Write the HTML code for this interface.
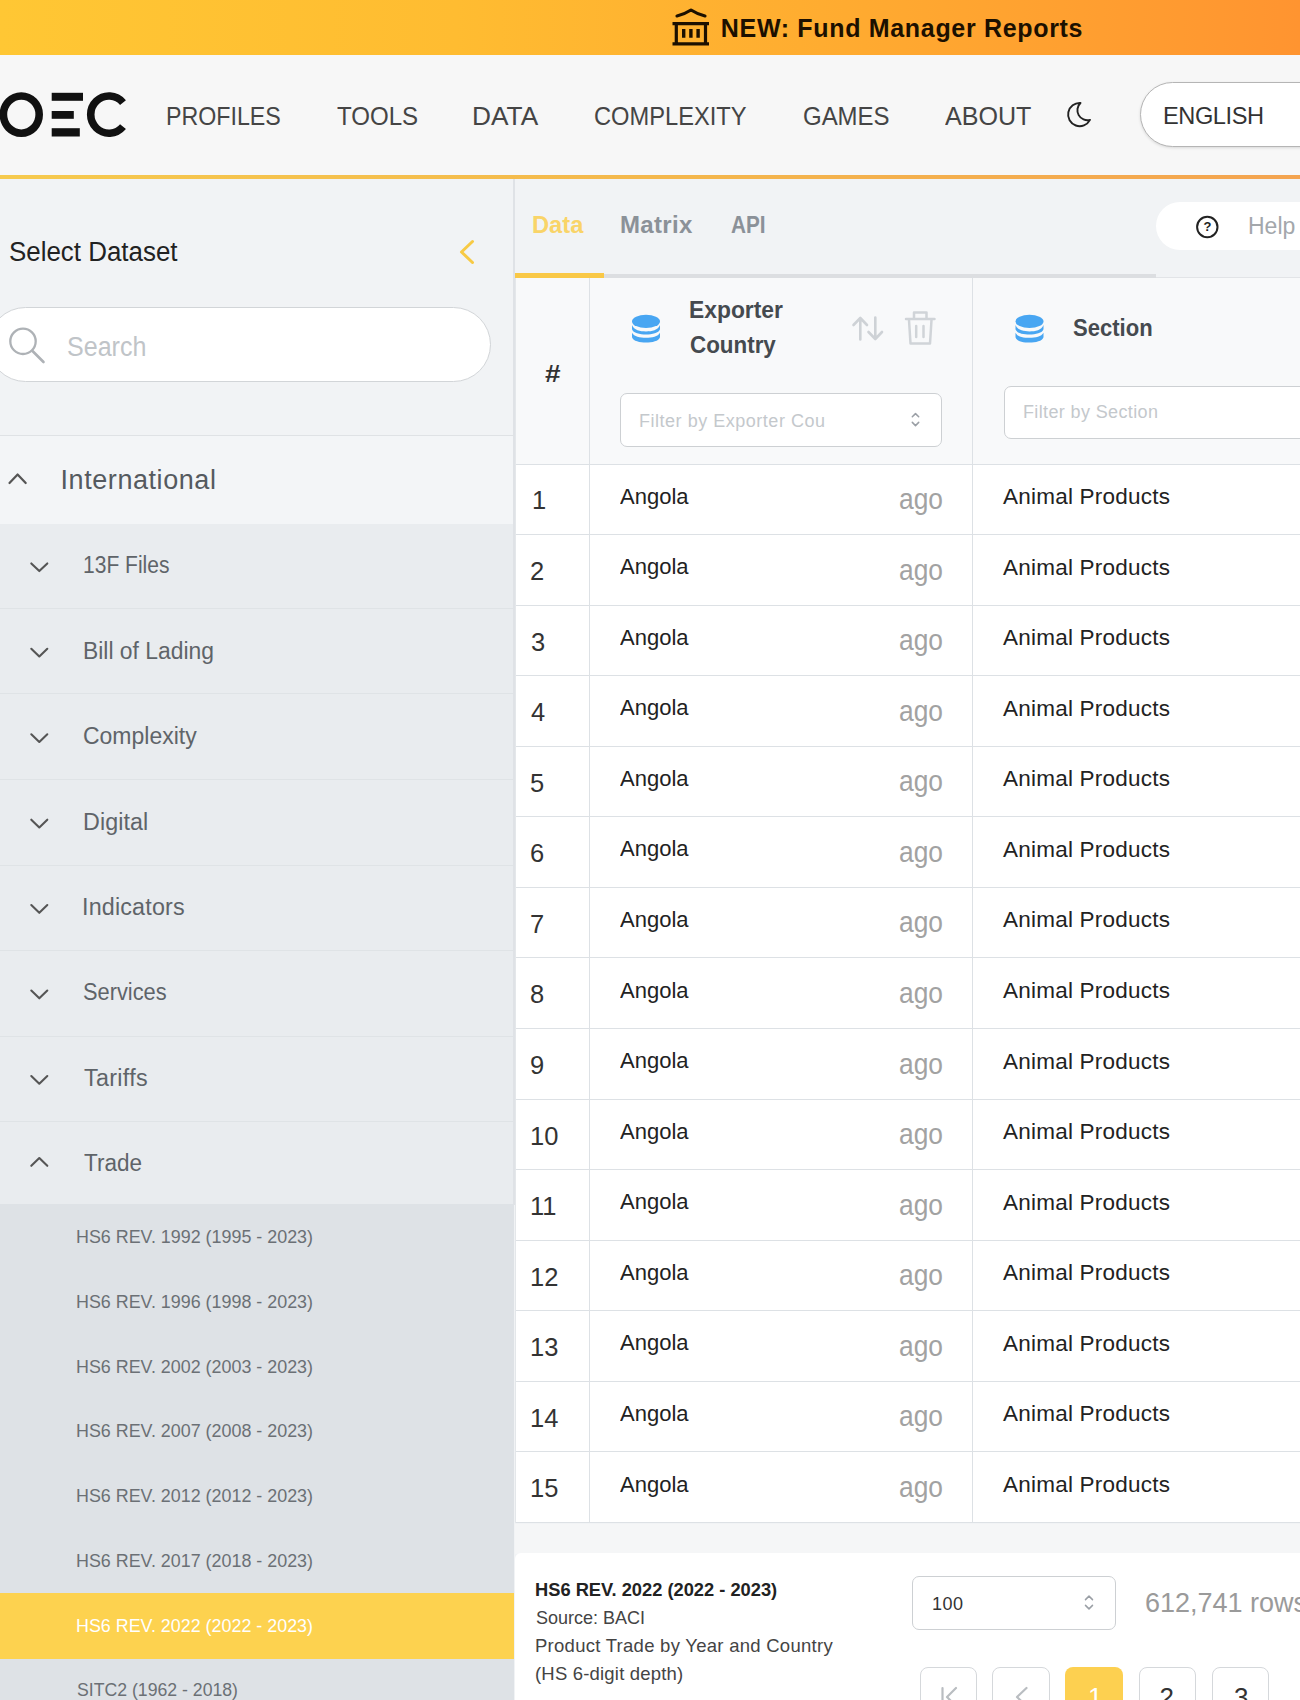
<!DOCTYPE html>
<html lang="en"><head><meta charset="utf-8"><title>OEC Data Explorer</title>
<style>
html,body{margin:0;padding:0}
body{width:1300px;height:1700px;position:relative;overflow:hidden;background:#f1f3f5;font-family:"Liberation Sans",sans-serif}
.b{position:absolute;display:block}
.t{position:absolute;white-space:nowrap;line-height:1;transform-origin:0 50%}
</style></head>
<body>
<div class="b" style="left:0px;top:0px;width:1300px;height:54.5px;background:linear-gradient(90deg,#ffc734 0%,#ffbc31 35%,#ffab30 65%,#ff9430 100%);"></div>
<div class="b" style="left:0px;top:54.5px;width:1300px;height:121px;background:#f7f7f7;"></div>
<div class="b" style="left:0px;top:174.5px;width:1300px;height:4px;background:linear-gradient(90deg,#f6ca4e 0%,#f4b84c 50%,#f4a450 100%);"></div>
<div class="b" style="left:0px;top:178.5px;width:1300px;height:1522px;background:#f1f3f5;"></div>
<div class="b" style="left:1140px;top:82px;width:220px;height:65px;background:#fff;border:1.5px solid #b5b5b5;border-radius:34px;box-sizing:border-box;box-shadow:0 1px 3px rgba(0,0,0,.12);"></div>
<div class="b" style="left:0px;top:178.5px;width:514px;height:1522px;background:#f1f3f5;"></div>
<div class="b" style="left:513px;top:178.5px;width:1.5px;height:1026px;background:#dfe2e6;"></div>
<div class="b" style="left:-12px;top:307px;width:503px;height:75px;background:#fff;border:1.5px solid #d2d5d8;border-radius:38px;box-sizing:border-box;"></div>
<div class="b" style="left:0px;top:434.5px;width:514px;height:1.5px;background:#dfe2e5;"></div>
<div class="b" style="left:0px;top:436px;width:513px;height:88px;background:#f3f5f7;"></div>
<div class="b" style="left:0px;top:524px;width:513px;height:680px;background:#e9ecef;"></div>
<div class="b" style="left:0px;top:608px;width:513px;height:1px;background:#dfe3e6;"></div>
<div class="b" style="left:0px;top:693px;width:513px;height:1px;background:#dfe3e6;"></div>
<div class="b" style="left:0px;top:779px;width:513px;height:1px;background:#dfe3e6;"></div>
<div class="b" style="left:0px;top:865px;width:513px;height:1px;background:#dfe3e6;"></div>
<div class="b" style="left:0px;top:950px;width:513px;height:1px;background:#dfe3e6;"></div>
<div class="b" style="left:0px;top:1036px;width:513px;height:1px;background:#dfe3e6;"></div>
<div class="b" style="left:0px;top:1121px;width:513px;height:1px;background:#dfe3e6;"></div>
<div class="b" style="left:0px;top:1204px;width:514px;height:496px;background:#dee2e6;"></div>
<div class="b" style="left:0px;top:1593px;width:514px;height:66px;background:#fdd24f;"></div>
<div class="b" style="left:514.5px;top:273.5px;width:641.5px;height:4.5px;background:#dcdee1;"></div>
<div class="b" style="left:514.5px;top:273px;width:89px;height:4.5px;background:#f9c846;"></div>
<div class="b" style="left:1156px;top:277px;width:144px;height:1.2px;background:#e2e4e7;"></div>
<div class="b" style="left:1156px;top:202px;width:200px;height:47.5px;background:#fff;border-radius:24px;"></div>
<div class="b" style="left:515.5px;top:278px;width:785px;height:186px;background:#f8f9fa;"></div>
<div class="b" style="left:515.5px;top:464px;width:785px;height:1059px;background:#fff;"></div>
<div class="b" style="left:515.5px;top:464px;width:785px;height:1px;background:#dde1e5;"></div>
<div class="b" style="left:515.5px;top:534px;width:785px;height:1px;background:#dde1e5;"></div>
<div class="b" style="left:515.5px;top:605px;width:785px;height:1px;background:#dde1e5;"></div>
<div class="b" style="left:515.5px;top:675px;width:785px;height:1px;background:#dde1e5;"></div>
<div class="b" style="left:515.5px;top:746px;width:785px;height:1px;background:#dde1e5;"></div>
<div class="b" style="left:515.5px;top:816px;width:785px;height:1px;background:#dde1e5;"></div>
<div class="b" style="left:515.5px;top:887px;width:785px;height:1px;background:#dde1e5;"></div>
<div class="b" style="left:515.5px;top:957px;width:785px;height:1px;background:#dde1e5;"></div>
<div class="b" style="left:515.5px;top:1028px;width:785px;height:1px;background:#dde1e5;"></div>
<div class="b" style="left:515.5px;top:1099px;width:785px;height:1px;background:#dde1e5;"></div>
<div class="b" style="left:515.5px;top:1169px;width:785px;height:1px;background:#dde1e5;"></div>
<div class="b" style="left:515.5px;top:1240px;width:785px;height:1px;background:#dde1e5;"></div>
<div class="b" style="left:515.5px;top:1310px;width:785px;height:1px;background:#dde1e5;"></div>
<div class="b" style="left:515.5px;top:1381px;width:785px;height:1px;background:#dde1e5;"></div>
<div class="b" style="left:515.5px;top:1451px;width:785px;height:1px;background:#dde1e5;"></div>
<div class="b" style="left:515.5px;top:1522px;width:785px;height:1px;background:#dde1e5;"></div>
<div class="b" style="left:589px;top:278px;width:1px;height:1245px;background:#dde1e5;"></div>
<div class="b" style="left:972px;top:278px;width:1px;height:1245px;background:#dde1e5;"></div>
<div class="b" style="left:515px;top:278px;width:1.2px;height:1245px;background:#e4e7ea;"></div>
<div class="b" style="left:620px;top:392.5px;width:322px;height:54px;background:#fff;border:1.2px solid #cdd0d3;border-radius:7px;box-sizing:border-box;"></div>
<div class="b" style="left:1003.5px;top:385.5px;width:340px;height:53.5px;background:#fff;border:1.2px solid #cdd0d3;border-radius:7px;box-sizing:border-box;"></div>
<div class="b" style="left:514.5px;top:1523.5px;width:786px;height:30px;background:#f5f6f7;"></div>
<div class="b" style="left:514.5px;top:1553px;width:786px;height:150px;background:#fff;border-top-left-radius:6px;"></div>
<div class="b" style="left:912px;top:1575.5px;width:204px;height:54px;background:#fff;border:1.2px solid #cdd0d3;border-radius:7px;box-sizing:border-box;"></div>
<div class="b" style="left:919.5px;top:1666.5px;width:57.5px;height:60px;background:#fff;border:1.2px solid #d5d8db;border-radius:8px;box-sizing:border-box;"></div>
<div class="b" style="left:992px;top:1666.5px;width:57.5px;height:60px;background:#fff;border:1.2px solid #d5d8db;border-radius:8px;box-sizing:border-box;"></div>
<div class="b" style="left:1065px;top:1666.5px;width:57.5px;height:60px;background:#fdd050;border-radius:8px;"></div>
<div class="b" style="left:1138.5px;top:1666.5px;width:57.5px;height:60px;background:#fff;border:1.2px solid #d5d8db;border-radius:8px;box-sizing:border-box;"></div>
<div class="b" style="left:1211.5px;top:1666.5px;width:57.5px;height:60px;background:#fff;border:1.2px solid #d5d8db;border-radius:8px;box-sizing:border-box;"></div>
<svg class="b" style="left:0;top:0" width="1300" height="1700" viewBox="0 0 1300 1700" fill="none" stroke-linecap="round" stroke-linejoin="round">
<!-- logo -->
<g stroke="#111" stroke-width="7.6" stroke-linecap="butt" fill="none">
<ellipse cx="21.3" cy="114.6" rx="17.9" ry="18.6"/>
<path d="M123 102.6 A18.3 18.6 0 1 0 123 126.6"/>
</g>
<g fill="#111" stroke="none"><rect x="51.7" y="92.8" width="31.3" height="8"/><rect x="51.7" y="111" width="22.1" height="7.8"/><rect x="51.7" y="128.2" width="28.1" height="8.3"/></g>
<!-- bank icon -->
<g stroke="#1c1000" stroke-width="3.2" stroke-linecap="butt" stroke-linejoin="miter">
<path d="M677 16 Q684 14.5 691 10 Q698 14.5 705 16" stroke-linecap="round" stroke-linejoin="round"/>
<path d="M672.5 23.7H709M672.5 43.8H709M676.3 24V43M705.5 24V43"/>
<path d="M683.7 29V37.8M690.9 29V37.8M698.1 29V37.8" stroke-width="3.4"/>
</g>
<!-- moon -->
<path d="M1080.5 103 A11.6 11.6 0 1 0 1090 119.9 A10 10 0 0 1 1080.5 103Z" stroke="#222" stroke-width="1.9"/>
<!-- sidebar collapse chevron -->
<path d="M472.5 241.5 L461.5 252 L472.5 262.5" stroke="#f7ca45" stroke-width="3"/>
<!-- search icon -->
<circle cx="23" cy="341.3" r="12.7" stroke="#aeb2b6" stroke-width="2.3"/>
<path d="M32.5 351 L43.5 362" stroke="#aeb2b6" stroke-width="2.6"/>
<!-- chevrons -->
<path d="M9.5 483 L17.6 474.5 L25.7 483" stroke="#555" stroke-width="2.2"/>
<path d="M31.3 563.4 L39.3 571.1 L47.3 563.4" stroke="#555" stroke-width="2.1"/>
<path d="M31.3 648.8 L39.3 656.5 L47.3 648.8" stroke="#555" stroke-width="2.1"/>
<path d="M31.3 734.3 L39.3 742.0 L47.3 734.3" stroke="#555" stroke-width="2.1"/>
<path d="M31.3 819.7 L39.3 827.4 L47.3 819.7" stroke="#555" stroke-width="2.1"/>
<path d="M31.3 905.1 L39.3 912.8 L47.3 905.1" stroke="#555" stroke-width="2.1"/>
<path d="M31.3 990.6 L39.3 998.3 L47.3 990.6" stroke="#555" stroke-width="2.1"/>
<path d="M31.3 1076.0 L39.3 1083.7 L47.3 1076.0" stroke="#555" stroke-width="2.1"/>
<path d="M31.3 1165.8 L39.3 1158.0 L47.3 1165.8" stroke="#555" stroke-width="2.1"/>

<!-- help -->
<circle cx="1207.3" cy="227" r="10.2" stroke="#222" stroke-width="2"/>
<!-- db icons -->
<g fill="#48a6f2" stroke="none" transform="translate(632,314.8)"><ellipse cx="14" cy="6.6" rx="14" ry="6.6"/><path d="M0 10.2 C2 15.5 8 16.6 14 16.6 C20 16.6 26 15.5 28 10.2 V14.5 C27 18.3 20 19.7 14 19.7 C8 19.7 1 18.3 0 14.500Z"/><path d="M0 18 C2 22 8 23 14 23 C20 23 26 22 28 18 V22.500 C27 26.400 20 27.800 14 27.800 C8 27.800 1 26.400 0 22.500Z"/></g><g fill="#48a6f2" stroke="none" transform="translate(1015.5,314.8)"><ellipse cx="14" cy="6.6" rx="14" ry="6.6"/><path d="M0 10.2 C2 15.5 8 16.6 14 16.6 C20 16.6 26 15.5 28 10.2 V14.5 C27 18.3 20 19.7 14 19.7 C8 19.7 1 18.3 0 14.500Z"/><path d="M0 18 C2 22 8 23 14 23 C20 23 26 22 28 18 V22.500 C27 26.400 20 27.800 14 27.800 C8 27.800 1 26.400 0 22.500Z"/></g>
<!-- sort -->
<g stroke="#ced2d6" stroke-width="2.6">
<path d="M860.3 339.5V318.5M853.5 325L860.3 318L867 325"/>
<path d="M875.3 317.5V338.5M868.5 332L875.3 339L882 332"/>
</g>
<!-- trash -->
<g stroke="#d0d4d8" stroke-width="2.5">
<path d="M906 319H934.5M914 318.5V312.5H926.5V318.5M909 320L910.5 343.5H930L931.5 320M916.2 326V337M923.5 326V337"/>
</g>
<!-- select chevrons -->
<g stroke="#9a9fa5" stroke-width="1.5">
<path d="M912.3 416.800L915.500 413.600L918.700 416.800M912.300 422.400L915.500 425.600L918.700 422.400"/>
<path d="M1085.500 1599.600L1089 1596.100L1092.500 1599.600M1085.500 1605.400L1089 1608.900L1092.500 1605.400"/>
</g>
<!-- pagination icons -->
<g stroke="#b9bdc1" stroke-width="2.2">
<path d="M942.5 1688V1706M956 1688L947 1697L956 1706"/>
<path d="M1026.5 1688L1017 1697L1026.5 1706"/>
</g>
</svg>
<span class="t" style="left:720.8px;top:15.6px;font-size:25px;color:#1c1000;font-weight:700;letter-spacing:0.68px;">NEW: Fund Manager Reports</span>
<span class="t" style="left:166.2px;top:102.8px;font-size:26.5px;color:#454545;transform:scaleX(0.8762);">PROFILES</span>
<span class="t" style="left:337.0px;top:102.8px;font-size:26.5px;color:#454545;transform:scaleX(0.9078);">TOOLS</span>
<span class="t" style="left:472.0px;top:102.8px;font-size:26.5px;color:#454545;transform:scaleX(0.9913);">DATA</span>
<span class="t" style="left:594.0px;top:102.8px;font-size:26.5px;color:#454545;transform:scaleX(0.8934);">COMPLEXITY</span>
<span class="t" style="left:802.7px;top:102.8px;font-size:26.5px;color:#454545;transform:scaleX(0.9039);">GAMES</span>
<span class="t" style="left:944.6px;top:102.8px;font-size:26.5px;color:#454545;transform:scaleX(0.9462);">ABOUT</span>
<span class="t" style="left:1163.0px;top:105.2px;font-size:23.6px;color:#333;letter-spacing:-0.42px;">ENGLISH</span>
<span class="t" style="left:9.0px;top:239.1px;font-size:27px;color:#222;transform:scaleX(0.9595);">Select Dataset</span>
<span class="t" style="left:67.4px;top:333.5px;font-size:27px;color:#c0c4c8;transform:scaleX(0.9278);">Search</span>
<span class="t" style="left:60.5px;top:467.1px;font-size:27px;color:#555a5f;letter-spacing:0.57px;">International</span>
<span class="t" style="left:83.1px;top:554.3px;font-size:23.3px;color:#5f6469;transform:scaleX(0.9028);">13F Files</span>
<span class="t" style="left:83.0px;top:639.7px;font-size:23.3px;color:#5f6469;transform:scaleX(0.9814);">Bill of Lading</span>
<span class="t" style="left:83.0px;top:725.1px;font-size:23.3px;color:#5f6469;transform:scaleX(0.9863);">Complexity</span>
<span class="t" style="left:83.0px;top:810.6px;font-size:23.3px;color:#5f6469;letter-spacing:0.07px;">Digital</span>
<span class="t" style="left:82.0px;top:896.0px;font-size:23.3px;color:#5f6469;letter-spacing:0.18px;">Indicators</span>
<span class="t" style="left:83.1px;top:981.4px;font-size:23.3px;color:#5f6469;transform:scaleX(0.9352);">Services</span>
<span class="t" style="left:84.0px;top:1066.9px;font-size:23.3px;color:#5f6469;letter-spacing:0.32px;">Tariffs</span>
<span class="t" style="left:84.0px;top:1152.3px;font-size:23.3px;color:#5f6469;transform:scaleX(0.9655);">Trade</span>
<span class="t" style="left:76.0px;top:1228.3px;font-size:18px;color:#6b7075;transform:scaleX(0.9937);">HS6 REV. 1992 (1995 - 2023)</span>
<span class="t" style="left:76.0px;top:1293.0px;font-size:18px;color:#6b7075;transform:scaleX(0.9937);">HS6 REV. 1996 (1998 - 2023)</span>
<span class="t" style="left:76.0px;top:1357.7px;font-size:18px;color:#6b7075;transform:scaleX(0.9937);">HS6 REV. 2002 (2003 - 2023)</span>
<span class="t" style="left:76.0px;top:1422.4px;font-size:18px;color:#6b7075;transform:scaleX(0.9937);">HS6 REV. 2007 (2008 - 2023)</span>
<span class="t" style="left:76.0px;top:1487.1px;font-size:18px;color:#6b7075;transform:scaleX(0.9937);">HS6 REV. 2012 (2012 - 2023)</span>
<span class="t" style="left:76.0px;top:1551.8px;font-size:18px;color:#6b7075;transform:scaleX(0.9937);">HS6 REV. 2017 (2018 - 2023)</span>
<span class="t" style="left:76.0px;top:1616.5px;font-size:18px;color:#fff;transform:scaleX(0.9937);">HS6 REV. 2022 (2022 - 2023)</span>
<span class="t" style="left:77.0px;top:1681.2px;font-size:18px;color:#6b7075;transform:scaleX(0.9811);">SITC2 (1962 - 2018)</span>
<span class="t" style="left:532.0px;top:212.7px;font-size:24px;color:#f9d468;font-weight:700;transform:scaleX(0.9870);">Data</span>
<span class="t" style="left:620.0px;top:212.7px;font-size:24px;color:#8b9198;font-weight:700;letter-spacing:0.33px;">Matrix</span>
<span class="t" style="left:731.0px;top:212.7px;font-size:24px;color:#8b9198;font-weight:700;transform:scaleX(0.8643);">API</span>
<span class="t" style="left:1248.0px;top:214.5px;font-size:23px;color:#a3a7ab;transform:scaleX(0.9998);">Help</span>
<span class="t" style="left:545.0px;top:361.8px;font-size:24.5px;color:#333;font-weight:700;transform:scaleX(1.1429);">#</span>
<span class="t" style="left:689.0px;top:299.0px;font-size:23px;color:#454a4f;font-weight:700;transform:scaleX(0.9932);">Exporter</span>
<span class="t" style="left:690.0px;top:333.5px;font-size:23px;color:#454a4f;font-weight:700;transform:scaleX(0.9732);">Country</span>
<span class="t" style="left:1073.0px;top:317.3px;font-size:23px;color:#454a4f;font-weight:700;transform:scaleX(0.9583);">Section</span>
<span class="t" style="left:639.0px;top:411.8px;font-size:18px;color:#c4c8cc;letter-spacing:0.52px;">Filter by Exporter Cou</span>
<span class="t" style="left:1023.0px;top:403.3px;font-size:18px;color:#c4c8cc;letter-spacing:0.37px;">Filter by Section</span>
<span class="t" style="left:532.0px;top:488.4px;font-size:25.5px;color:#333;">1</span>
<span class="t" style="left:620.0px;top:485.5px;font-size:22.5px;color:#222;transform:scaleX(0.9781);">Angola</span>
<span class="t" style="left:899.1px;top:484.9px;font-size:29px;color:#a2a2a2;transform:scaleX(0.9080);">ago</span>
<span class="t" style="left:1003.0px;top:485.9px;font-size:22.5px;color:#222;letter-spacing:0.22px;">Animal Products</span>
<span class="t" style="left:530.0px;top:559.0px;font-size:25.5px;color:#333;">2</span>
<span class="t" style="left:620.0px;top:556.1px;font-size:22.5px;color:#222;transform:scaleX(0.9781);">Angola</span>
<span class="t" style="left:899.1px;top:555.5px;font-size:29px;color:#a2a2a2;transform:scaleX(0.9080);">ago</span>
<span class="t" style="left:1003.0px;top:556.5px;font-size:22.5px;color:#222;letter-spacing:0.22px;">Animal Products</span>
<span class="t" style="left:531.0px;top:629.5px;font-size:25.5px;color:#333;">3</span>
<span class="t" style="left:620.0px;top:626.7px;font-size:22.5px;color:#222;transform:scaleX(0.9781);">Angola</span>
<span class="t" style="left:899.1px;top:626.1px;font-size:29px;color:#a2a2a2;transform:scaleX(0.9080);">ago</span>
<span class="t" style="left:1003.0px;top:627.1px;font-size:22.5px;color:#222;letter-spacing:0.22px;">Animal Products</span>
<span class="t" style="left:531.0px;top:700.1px;font-size:25.5px;color:#333;">4</span>
<span class="t" style="left:620.0px;top:697.3px;font-size:22.5px;color:#222;transform:scaleX(0.9781);">Angola</span>
<span class="t" style="left:899.1px;top:696.7px;font-size:29px;color:#a2a2a2;transform:scaleX(0.9080);">ago</span>
<span class="t" style="left:1003.0px;top:697.7px;font-size:22.5px;color:#222;letter-spacing:0.22px;">Animal Products</span>
<span class="t" style="left:530.0px;top:770.7px;font-size:25.5px;color:#333;">5</span>
<span class="t" style="left:620.0px;top:767.8px;font-size:22.5px;color:#222;transform:scaleX(0.9781);">Angola</span>
<span class="t" style="left:899.1px;top:767.2px;font-size:29px;color:#a2a2a2;transform:scaleX(0.9080);">ago</span>
<span class="t" style="left:1003.0px;top:768.2px;font-size:22.5px;color:#222;letter-spacing:0.22px;">Animal Products</span>
<span class="t" style="left:530.0px;top:841.3px;font-size:25.5px;color:#333;">6</span>
<span class="t" style="left:620.0px;top:838.4px;font-size:22.5px;color:#222;transform:scaleX(0.9781);">Angola</span>
<span class="t" style="left:899.1px;top:837.8px;font-size:29px;color:#a2a2a2;transform:scaleX(0.9080);">ago</span>
<span class="t" style="left:1003.0px;top:838.8px;font-size:22.5px;color:#222;letter-spacing:0.22px;">Animal Products</span>
<span class="t" style="left:530.0px;top:911.8px;font-size:25.5px;color:#333;">7</span>
<span class="t" style="left:620.0px;top:909.0px;font-size:22.5px;color:#222;transform:scaleX(0.9781);">Angola</span>
<span class="t" style="left:899.1px;top:908.4px;font-size:29px;color:#a2a2a2;transform:scaleX(0.9080);">ago</span>
<span class="t" style="left:1003.0px;top:909.4px;font-size:22.5px;color:#222;letter-spacing:0.22px;">Animal Products</span>
<span class="t" style="left:530.0px;top:982.4px;font-size:25.5px;color:#333;">8</span>
<span class="t" style="left:620.0px;top:979.5px;font-size:22.5px;color:#222;transform:scaleX(0.9781);">Angola</span>
<span class="t" style="left:899.1px;top:978.9px;font-size:29px;color:#a2a2a2;transform:scaleX(0.9080);">ago</span>
<span class="t" style="left:1003.0px;top:979.9px;font-size:22.5px;color:#222;letter-spacing:0.22px;">Animal Products</span>
<span class="t" style="left:530.0px;top:1053.0px;font-size:25.5px;color:#333;">9</span>
<span class="t" style="left:620.0px;top:1050.1px;font-size:22.5px;color:#222;transform:scaleX(0.9781);">Angola</span>
<span class="t" style="left:899.1px;top:1049.5px;font-size:29px;color:#a2a2a2;transform:scaleX(0.9080);">ago</span>
<span class="t" style="left:1003.0px;top:1050.5px;font-size:22.5px;color:#222;letter-spacing:0.22px;">Animal Products</span>
<span class="t" style="left:530.0px;top:1123.5px;font-size:25.5px;color:#333;">10</span>
<span class="t" style="left:620.0px;top:1120.7px;font-size:22.5px;color:#222;transform:scaleX(0.9781);">Angola</span>
<span class="t" style="left:899.1px;top:1120.1px;font-size:29px;color:#a2a2a2;transform:scaleX(0.9080);">ago</span>
<span class="t" style="left:1003.0px;top:1121.1px;font-size:22.5px;color:#222;letter-spacing:0.22px;">Animal Products</span>
<span class="t" style="left:530.0px;top:1194.1px;font-size:25.5px;color:#333;">11</span>
<span class="t" style="left:620.0px;top:1191.2px;font-size:22.5px;color:#222;transform:scaleX(0.9781);">Angola</span>
<span class="t" style="left:899.1px;top:1190.6px;font-size:29px;color:#a2a2a2;transform:scaleX(0.9080);">ago</span>
<span class="t" style="left:1003.0px;top:1191.6px;font-size:22.5px;color:#222;letter-spacing:0.22px;">Animal Products</span>
<span class="t" style="left:530.0px;top:1264.7px;font-size:25.5px;color:#333;">12</span>
<span class="t" style="left:620.0px;top:1261.8px;font-size:22.5px;color:#222;transform:scaleX(0.9781);">Angola</span>
<span class="t" style="left:899.1px;top:1261.2px;font-size:29px;color:#a2a2a2;transform:scaleX(0.9080);">ago</span>
<span class="t" style="left:1003.0px;top:1262.2px;font-size:22.5px;color:#222;letter-spacing:0.22px;">Animal Products</span>
<span class="t" style="left:530.0px;top:1335.2px;font-size:25.5px;color:#333;">13</span>
<span class="t" style="left:620.0px;top:1332.4px;font-size:22.5px;color:#222;transform:scaleX(0.9781);">Angola</span>
<span class="t" style="left:899.1px;top:1331.8px;font-size:29px;color:#a2a2a2;transform:scaleX(0.9080);">ago</span>
<span class="t" style="left:1003.0px;top:1332.8px;font-size:22.5px;color:#222;letter-spacing:0.22px;">Animal Products</span>
<span class="t" style="left:530.0px;top:1405.8px;font-size:25.5px;color:#333;">14</span>
<span class="t" style="left:620.0px;top:1403.0px;font-size:22.5px;color:#222;transform:scaleX(0.9781);">Angola</span>
<span class="t" style="left:899.1px;top:1402.4px;font-size:29px;color:#a2a2a2;transform:scaleX(0.9080);">ago</span>
<span class="t" style="left:1003.0px;top:1403.4px;font-size:22.5px;color:#222;letter-spacing:0.22px;">Animal Products</span>
<span class="t" style="left:530.0px;top:1476.4px;font-size:25.5px;color:#333;">15</span>
<span class="t" style="left:620.0px;top:1473.5px;font-size:22.5px;color:#222;transform:scaleX(0.9781);">Angola</span>
<span class="t" style="left:899.1px;top:1472.9px;font-size:29px;color:#a2a2a2;transform:scaleX(0.9080);">ago</span>
<span class="t" style="left:1003.0px;top:1473.9px;font-size:22.5px;color:#222;letter-spacing:0.22px;">Animal Products</span>
<span class="t" style="left:535.0px;top:1580.7px;font-size:18.5px;color:#222;font-weight:700;transform:scaleX(0.9879);">HS6 REV. 2022 (2022 - 2023)</span>
<span class="t" style="left:536.0px;top:1609.0px;font-size:18.5px;color:#444;transform:scaleX(0.9735);">Source: BACI</span>
<span class="t" style="left:535.0px;top:1637.0px;font-size:18.5px;color:#444;letter-spacing:0.27px;">Product Trade by Year and Country</span>
<span class="t" style="left:535.0px;top:1665.3px;font-size:18.5px;color:#444;letter-spacing:0.19px;">(HS 6-digit depth)</span>
<span class="t" style="left:932.0px;top:1595.3px;font-size:18px;color:#333;letter-spacing:0.49px;">100</span>
<span class="t" style="left:1145.0px;top:1589.8px;font-size:27px;color:#9a9a9a;">612,741 rows</span>
<span class="t" style="left:1088.0px;top:1684.0px;font-size:26px;color:#fff;">1</span>
<span class="t" style="left:1159.5px;top:1684.0px;font-size:26px;color:#333;">2</span>
<span class="t" style="left:1234.0px;top:1684.0px;font-size:26px;color:#333;">3</span>
<span class="t" style="left:1203.6px;top:219.6px;font-size:13px;font-weight:700;color:#222;">?</span>
</body></html>
